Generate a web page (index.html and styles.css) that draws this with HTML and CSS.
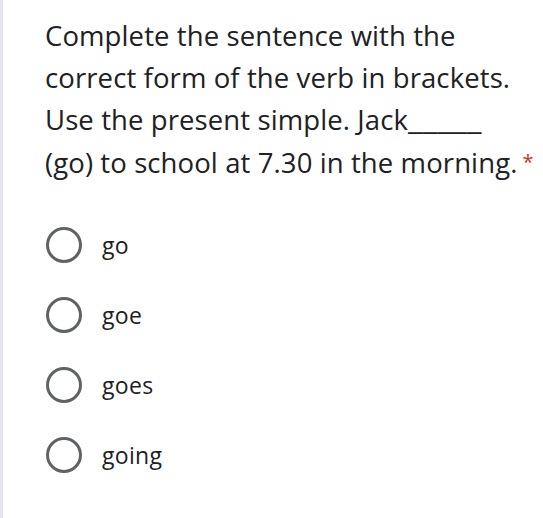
FILE: index.html
```html
<!DOCTYPE html>
<html>
<head>
<meta charset="utf-8">
<link rel="stylesheet" href="styles.css">
</head>
<body>
<div class="card">
  <div class="question">Complete the sentence with the correct form of the verb in brackets. Use the present simple. Jack<span class="blank">_____</span> <span class="keep">(go) to school at 7.30 in the morning.<span class="req">*</span></span></div>
  <div class="options">
    <label class="option"><span class="radio"></span><span class="label">go</span></label>
    <label class="option"><span class="radio"></span><span class="label">goe</span></label>
    <label class="option"><span class="radio"></span><span class="label">goes</span></label>
    <label class="option"><span class="radio"></span><span class="label">going</span></label>
  </div>
</div>
</body>
</html>
```
FILE: styles.css
```css
html, body {
  margin: 0;
  padding: 0;
  background: #fff;
}
body {
  font-family: "Open Sans", Roboto, sans-serif;
  color: #202124;
}
.card {
  min-height: 518px;
  box-sizing: border-box;
  border-left: 3px solid #e6e4f0;
  padding: 15px 0 0 42px;
}
.question {
  font-size: 27.5px;
  line-height: 42px;
  letter-spacing: 0.1px;
  max-width: 492px;
}
.blank {
  display: inline-block;
  transform: scaleX(1.22);
  transform-origin: left center;
  margin-right: 14px;
  letter-spacing: 0;
}
.keep {
  white-space: nowrap;
}
.req {
  color: #d93025;
  font-size: 20px;
  margin-left: 5px;
  vertical-align: 4px;
}
.options {
  display: flex;
  flex-direction: column;
  gap: 34px;
  margin-top: 43px;
}
.option {
  display: flex;
  align-items: center;
  gap: 20px;
  height: 36px;
}
.radio {
  width: 30px;
  height: 30px;
  border: 3px solid #5f6368;
  border-radius: 50%;
  margin-left: 1px;
}
.label {
  font-size: 23px;
  letter-spacing: 0.3px;
}
```
